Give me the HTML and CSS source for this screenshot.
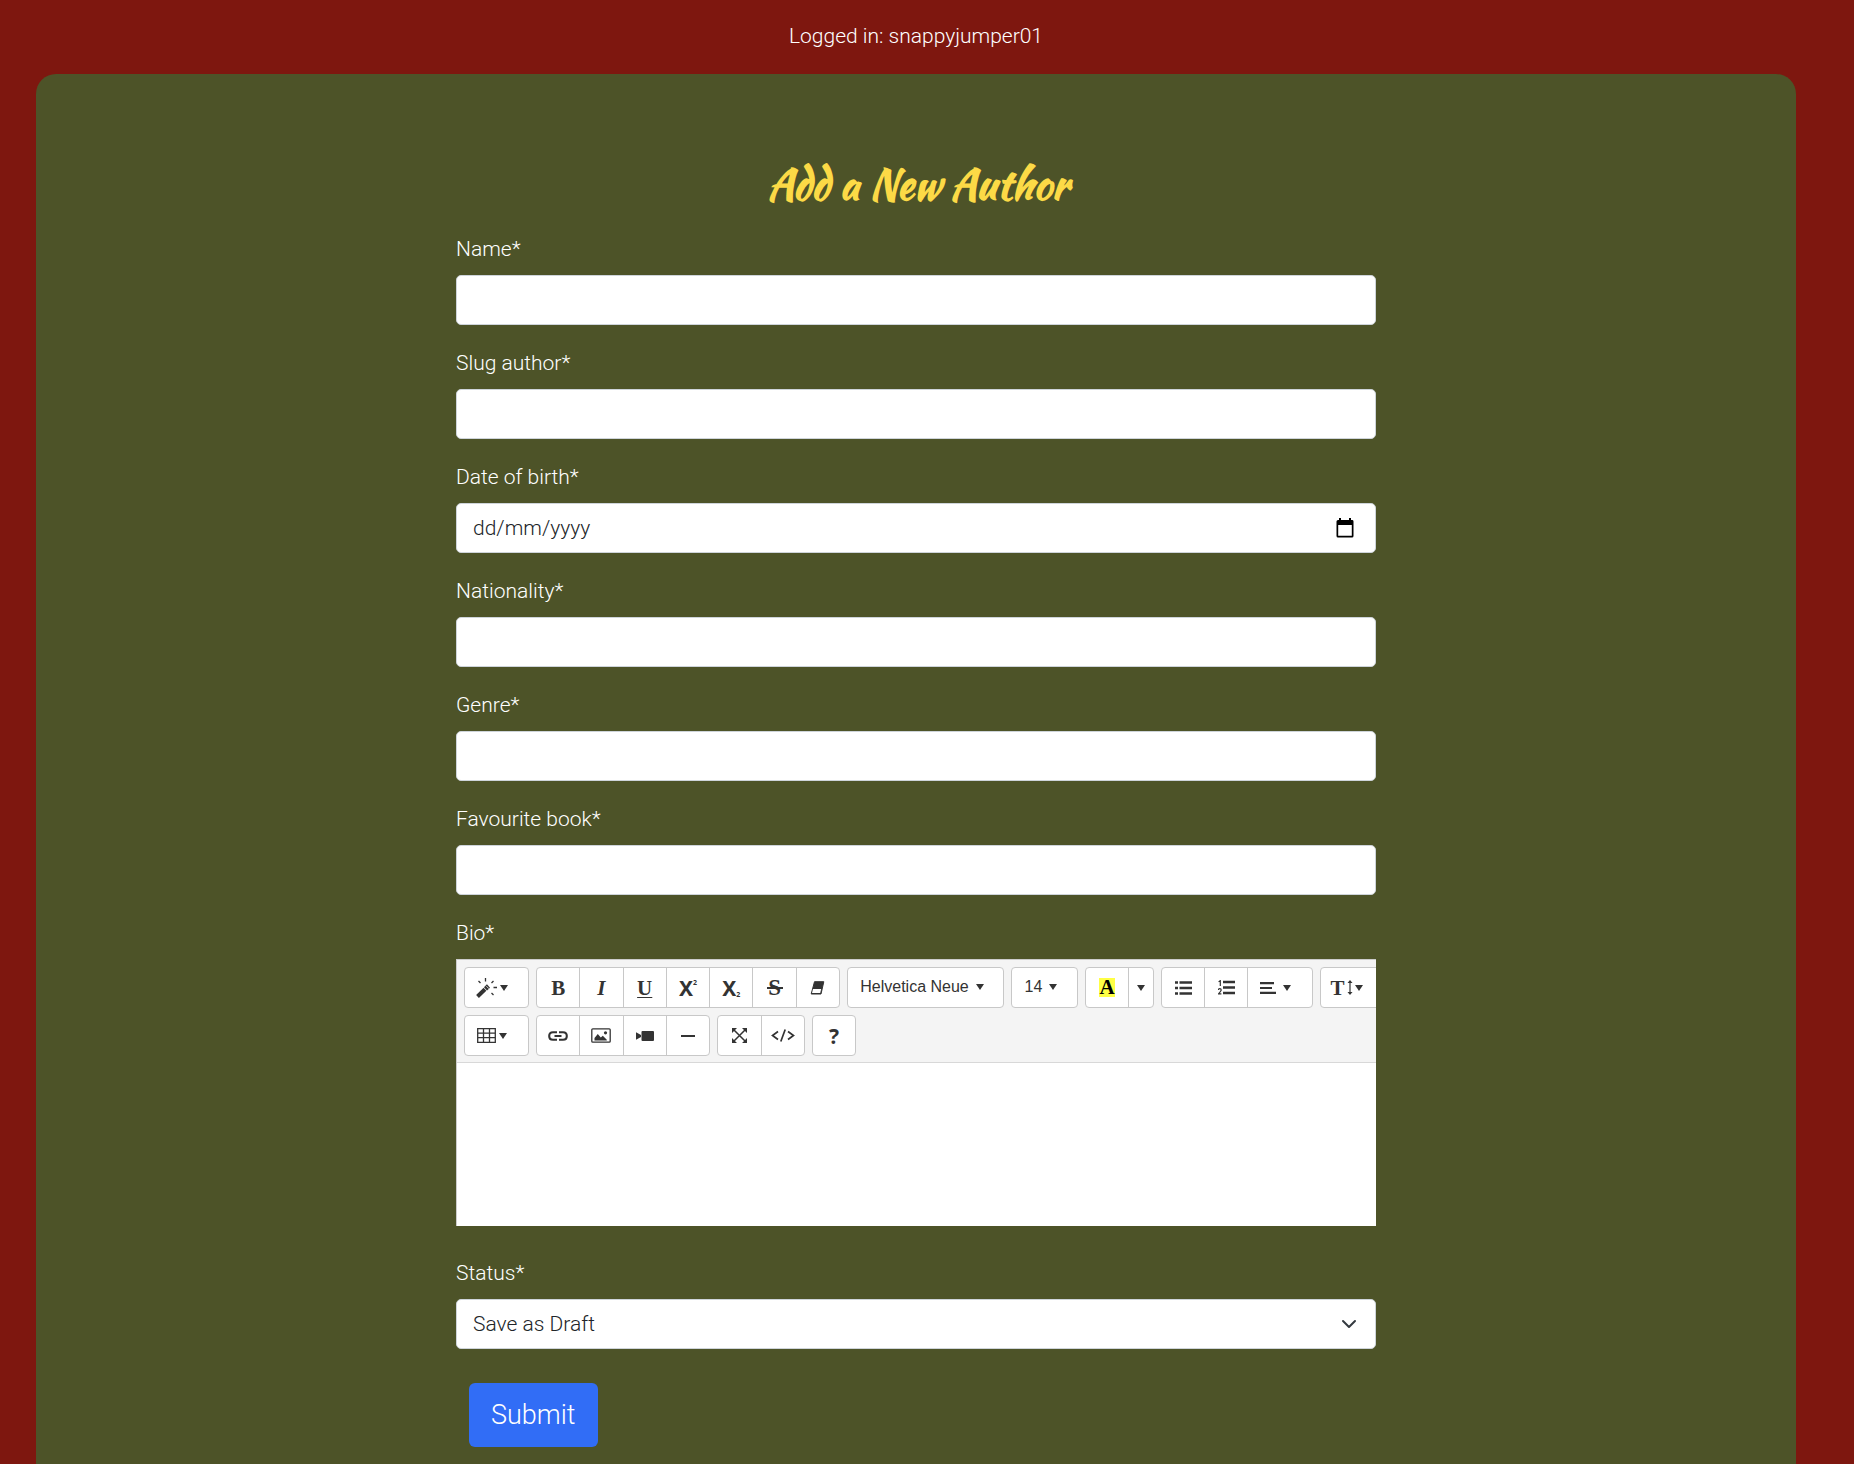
FILE: index.html
```html
<!DOCTYPE html>
<html lang="en-GB">
<head>
<meta charset="utf-8">
<meta name="viewport" content="width=device-width, initial-scale=1">
<title>Add a New Author</title>
<link rel="stylesheet" href="styles.css">
</head>
<body>
<header class="login-status">Logged in: snappyjumper01</header>
<main class="card">
  <h1 class="title">Add a New Author</h1>
  <form class="author-form">
    <div class="field"><label for="name">Name*</label><input class="control" id="name" type="text"></div>
    <div class="field"><label for="slug">Slug author*</label><input class="control" id="slug" type="text"></div>
    <div class="field">
      <label for="dob">Date of birth*</label>
      <div class="control date">
        <input class="date-input" id="dob" type="text" placeholder="dd/mm/yyyy">
        <button class="date-button" type="button" aria-label="Choose date">
          <svg width="18" height="20" viewBox="0 0 18 20"><path d="M3 0h2v2h8V0h2v2h1.500Q17.500 2 17.500 3.500V18q0 1.500-1.500 1.500H2Q.5 19.500 .5 18V3.500Q.5 2 2 2h1zM2.200 7v10.800h13.600V7z" fill="#000" fill-rule="evenodd"/></svg>
        </button>
      </div>
    </div>
    <div class="field"><label for="nationality">Nationality*</label><input class="control" id="nationality" type="text"></div>
    <div class="field"><label for="genre">Genre*</label><input class="control" id="genre" type="text"></div>
    <div class="field"><label for="book">Favourite book*</label><input class="control" id="book" type="text"></div>
    <div class="field field-editor">
      <label for="bio">Bio*</label>
      <div class="editor">
        <div class="toolbar">
          <div class="toolbar-row">
            <div class="group">
              <button class="tool menu" type="button" aria-label="Style">
                <svg width="21" height="20" viewBox="0 0 21 20"><path d="M1.500 18.500 9 11.300" stroke="#333" stroke-width="4"/><path d="m9.500 10.800 3-2.800" stroke="#333" stroke-width="4.500"/><path d="m10.400 8.200 2.500 2.500" stroke="#fff" stroke-width=".8"/><path d="M9.500 0v3.500M2.500 3l2 2M17.500 3l-2 2M17.500 9.500H21M15.500 15l2 2" stroke="#333" stroke-width="1.300"/></svg>
                <span class="caret"></span>
              </button>
            </div>
            <div class="group group-text">
              <button class="tool serif" type="button" aria-label="Bold">B</button>
              <button class="tool serif italic" type="button" aria-label="Italic">I</button>
              <button class="tool serif underline" type="button" aria-label="Underline">U</button>
              <button class="tool script" type="button" aria-label="Superscript">X<sup>2</sup></button>
              <button class="tool script" type="button" aria-label="Subscript">X<sub>2</sub></button>
              <button class="tool serif strike" type="button" aria-label="Strikethrough">S</button>
              <button class="tool" type="button" aria-label="Remove font style">
                <svg width="15" height="14" viewBox="0 0 15 14"><path d="M4.500.7h9.300L11 13H1.200z" fill="#333" stroke="#333" stroke-linejoin="round"/><path d="M3 8h8.200l-1 4H2z" fill="#fff"/></svg>
              </button>
            </div>
            <div class="group group-font"><button class="tool menu label" type="button">Helvetica Neue<span class="caret"></span></button></div>
            <div class="group group-size"><button class="tool menu label" type="button">14<span class="caret"></span></button></div>
            <div class="group group-color">
              <button class="tool serif" type="button" aria-label="Recent color"><span class="swatch">A</span></button>
              <button class="tool narrow" type="button" aria-label="More colors"><span class="caret"></span></button>
            </div>
            <div class="group group-para">
              <button class="tool" type="button" aria-label="Unordered list">
                <svg width="17" height="14" viewBox="0 0 17 14"><path d="M0 1.500h3M4.500 1.500H17M0 7h3M4.500 7H17M0 12.500h3M4.500 12.500H17" stroke="#333" stroke-width="2.600"/></svg>
              </button>
              <button class="tool" type="button" aria-label="Ordered list">
                <svg width="17" height="15" viewBox="0 0 17 15"><path d="M5 2h12M5 7.500h12M5 13h12" stroke="#333" stroke-width="2.600"/><path d="M.6 1.800 2.300.7V6M.4 10q0-1.400 1.400-1.400T3.200 10q0 .8-2.700 3.900h2.900" fill="none" stroke="#333" stroke-width="1.200"/></svg>
              </button>
              <button class="tool menu wide" type="button" aria-label="Paragraph">
                <svg width="16" height="12" viewBox="0 0 16 12"><path d="M0 1.200h14M0 6h12M0 10.800h16" stroke="#333" stroke-width="2.200"/></svg>
                <span class="caret"></span>
              </button>
            </div>
            <div class="group">
              <button class="tool menu height serif" type="button" aria-label="Line height">T<svg width="6" height="15" viewBox="0 0 6 15"><path d="M3 1v13" stroke="#333" stroke-width="1.200"/><path d="M.5 3 3 0l2.500 3zM.5 12 3 15l2.500-3z" fill="#333"/></svg><span class="caret"></span></button>
            </div>
          </div>
          <div class="toolbar-row">
            <div class="group">
              <button class="tool menu" type="button" aria-label="Table">
                <svg width="19" height="15" viewBox="0 0 19 15"><path d="M.7.7h17.600v13.600H.7zM.7 5.200h17.600M.7 9.700h17.600M6.500.7v13.600M12.500.7v13.600" fill="none" stroke="#333" stroke-width="1.300"/></svg>
                <span class="caret"></span>
              </button>
            </div>
            <div class="group group-insert">
              <button class="tool" type="button" aria-label="Link">
                <svg width="20" height="10" viewBox="0 0 20 10"><path d="M9 1.200H5Q1.200 1.200 1.200 5T5 8.800h4M11 1.200h4q3.800 0 3.800 3.800T15 8.800h-4M6.500 5h7" fill="none" stroke="#333" stroke-width="2.100"/></svg>
              </button>
              <button class="tool" type="button" aria-label="Picture">
                <svg width="20" height="15" viewBox="0 0 20 15"><rect x=".8" y=".8" width="18.400" height="13.400" rx="1" fill="none" stroke="#333" stroke-width="1.300"/><path d="M3.500 12.500V10l3.300-4 3 3.500 2-1.800 4 4v.8z" fill="#333"/><circle cx="14.500" cy="4.800" r="1.600" fill="#333"/></svg>
              </button>
              <button class="tool" type="button" aria-label="Video">
                <svg width="18" height="10" viewBox="0 0 18 10"><path d="M0 1.200 5 4v2L0 8.800z" fill="#333"/><rect x="5.500" width="12.500" height="10" rx="1" fill="#333"/></svg>
              </button>
              <button class="tool" type="button" aria-label="Horizontal rule">
                <svg width="14" height="2" viewBox="0 0 14 2"><path d="M0 1h14" stroke="#333" stroke-width="2"/></svg>
              </button>
            </div>
            <div class="group group-view">
              <button class="tool" type="button" aria-label="Full screen">
                <svg width="15" height="15" viewBox="0 0 15 15"><path d="m2 2 11 11M13 2 2 13" stroke="#333" stroke-width="1.500"/><path d="M0 0h5L0 5zM15 0h-5l5 5zM0 15h5l-5-5zM15 15h-5l5-5z" fill="#333"/></svg>
              </button>
              <button class="tool" type="button" aria-label="Code view">
                <svg width="24" height="13" viewBox="0 0 24 13"><path d="M7 2.500 1.500 6.500 7 10.500M17 2.500l5.500 4-5.500 4M14.200.5 9.800 12.500" fill="none" stroke="#333" stroke-width="1.700"/></svg>
              </button>
            </div>
            <div class="group group-help"><button class="tool script" type="button" aria-label="Help">?</button></div>
          </div>
        </div>
        <textarea class="editor-area" id="bio"></textarea>
      </div>
    </div>
    <div class="field">
      <label for="status">Status*</label>
      <select class="control select" id="status"><option>Save as Draft</option><option>Publish</option></select>
    </div>
    <button class="submit" type="submit">Submit</button>
  </form>
</main>
</body>
</html>
```
FILE: styles.css
```css
* { box-sizing: border-box; }

body {
  margin: 0;
  padding: 0 58px 0 36px;
  min-height: 100vh;
  display: flex;
  flex-direction: column;
  background: #7e170f;
  color: #fff;
  font-family: Roboto, "Liberation Sans", sans-serif;
  font-size: 21px;
  font-weight: 300;
  line-height: 32px;
}

button, input, select, textarea { font: inherit; }

.login-status { padding: 20px 0 22px; text-align: center; }

.card {
  flex: 1;
  padding: 80px 24px 16px;
  border-radius: 20px 20px 0 0;
  background: #4d5328;
}

.title {
  margin: 0 0 19px;
  padding-left: 4px;
  color: #fcda46;
  font-family: "Kaushan Script", Lato, sans-serif;
  font-size: 42px;
  font-weight: 700;
  line-height: 60px;
  text-align: center;
}

.author-form { max-width: 920px; margin: 0 auto; }

.field {
  display: flex;
  flex-direction: column;
  gap: 10px;
  margin-bottom: 22px;
}
.field-editor { margin-bottom: 31px; }

.control {
  width: 100%;
  height: 50px;
  padding: 8px 16px;
  border: 1px solid #ced4da;
  border-radius: 5px;
  background: #fff;
  color: #212529;
}

.date { display: flex; align-items: center; padding-right: 21px; }
.date-input {
  flex: 1;
  min-width: 0;
  padding: 0;
  border: 0;
  outline: 0;
  background: none;
  color: #212529;
}
.date-input::placeholder { color: #212529; opacity: 1; }
.date-button { display: flex; padding: 0; border: 0; background: none; }

.select {
  appearance: none;
  background: #fff url("data:image/svg+xml,%3Csvg xmlns='http://www.w3.org/2000/svg' viewBox='0 0 16 16'%3E%3Cpath fill='none' stroke='%23343a40' stroke-linecap='round' stroke-linejoin='round' stroke-width='2' d='m2 5 6 6 6-6'/%3E%3C/svg%3E") no-repeat right 18px center / 16px 16px;
}

.editor { border: 1px solid #ccc; border-bottom: 0; border-right: 0; background: #fff; }

.toolbar {
  display: flex;
  flex-direction: column;
  gap: 7px;
  padding: 7px 0 6px 7px;
  overflow: hidden;
  border-bottom: 1px solid #d8d8d8;
  background: #f4f4f4;
}
.toolbar-row { display: flex; gap: 7px; }

.group {
  display: flex;
  flex: none;
  width: 65px;
  height: 41px;
  border: 1px solid #c8c8c8;
  border-radius: 4px;
  overflow: hidden;
  background: #fff;
}
.group-text { width: 304px; }
.group-font { width: 157px; }
.group-size { width: 67px; }
.group-color { width: 69px; }
.group-para { width: 152px; }
.group-insert { width: 174px; }
.group-view { width: 88px; }
.group-help { width: 44px; }

.tool {
  display: flex;
  flex: 1;
  align-items: center;
  justify-content: center;
  padding: 0;
  border: 0;
  background: none;
  color: #333;
  white-space: nowrap;
}
.tool + .tool { border-left: 1px solid #c8c8c8; }
.menu { gap: 3px; padding-right: 9px; }
.narrow { flex: 0 0 25px; }
.wide { flex: 0 0 65px; gap: 7px; }
.label {
  gap: 7px;
  padding-right: 7px;
  padding-bottom: 2px;
  font-family: "Liberation Sans", Arial, sans-serif;
  font-size: 16px;
  font-weight: 400;
}

.serif { font-family: "Liberation Serif", serif; font-size: 21px; font-weight: 700; }
.italic { font-style: italic; }
.underline { text-decoration: underline 1px; text-underline-offset: 2px; }
.strike { background: linear-gradient(#333, #333) no-repeat center / 16px 2px; font-size: 23px; }
.height { gap: 2px; padding-right: 12px; }
.script { font-family: "Noto Sans", sans-serif; font-size: 21px; font-weight: 700; }
.script sup, .script sub { font-size: 7px; line-height: 8px; }
.script sup { padding-bottom: 10px; }
.script sub { padding-top: 14px; }
.swatch { width: 16px; background: #ffff45; color: #000; line-height: 19px; text-align: center; }

.caret {
  border-top: 6px solid #333;
  border-right: 4px solid transparent;
  border-left: 4px solid transparent;
}

.editor-area {
  display: block;
  width: 100%;
  height: 163px;
  padding: 13px;
  border: 0;
  outline: 0;
  resize: none;
  background: #fff;
  color: #212529;
}

.submit {
  margin: 12px 0 0 13px;
  padding: 12px 22px;
  border: 0;
  border-radius: 6px;
  background: #316df6;
  color: #fff;
  font-size: 27px;
  line-height: 40px;
}
```
